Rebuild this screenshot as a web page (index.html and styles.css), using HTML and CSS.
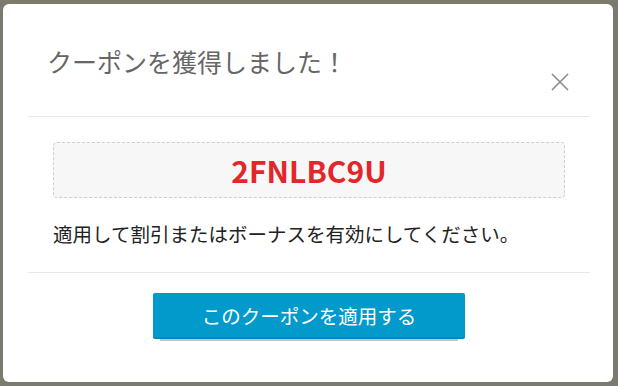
FILE: index.html
```html
<!DOCTYPE html>
<html lang="ja">
  <head>
    <meta charset="UTF-8" />
    <meta name="viewport" content="width=device-width, initial-scale=1" />
    <title>クーポン</title>
    <link rel="stylesheet" href="styles.css">
  </head>
  <body>
    <div class="backdrop">
      <div class="modal">
        <div class="modal-header">
          <h2 class="modal-title">クーポンを獲得しました！</h2>
          <button class="close-btn" aria-label="閉じる">
            <svg width="18" height="18" viewBox="0 0 18 18">
              <path d="M1 1 L17 17 M17 1 L1 17" stroke="#8a8a8a" stroke-width="1.6" fill="none" />
            </svg>
          </button>
        </div>

        <div class="modal-body">
          <div class="coupon-code">2FNLBC9U</div>
          <p class="coupon-note">適用して割引またはボーナスを有効にしてください。</p>
        </div>

        <div class="modal-footer">
          <button class="apply-btn">このクーポンを適用する</button>
        </div>
      </div>
    </div>
  </body>
</html>
```

FILE: styles.css
```css
body {
  margin: 0;
  padding: 0;
  font-family: "Noto Sans CJK JP", "Noto Sans", sans-serif;
  background-color: #7b7a6d;
}

.backdrop {
  width: 618px;
  height: 386px;
  padding: 4px 5px 4px 3px;
  box-sizing: border-box;
}

.modal {
  height: 378px;
  background-color: white;
  border-radius: 6px;
  padding: 0 23px 0 25px;
  box-sizing: border-box;
}

.modal-header {
  display: flex;
  align-items: flex-start;
  height: 112px;
  border-bottom: 1px solid #e8e8e8;
}

.modal-title {
  margin: 42px 0 0 19px;
  font-size: 25px;
  font-weight: normal;
  line-height: 30px;
  color: #666;
}

.close-btn {
  margin: 69px 21px 0 auto;
  padding: 0;
  border: none;
  background: none;
  width: 18px;
  height: 18px;
  cursor: pointer;
}

.close-btn svg {
  display: block;
}

.modal-body {
  padding: 25px 25px 0;
  height: 156px;
  box-sizing: border-box;
  border-bottom: 1px solid #e8e8e8;
}

.coupon-code {
  height: 56px;
  box-sizing: border-box;
  border: 1px dashed #cfcfcf;
  border-radius: 4px;
  background-color: #f7f7f7;
  text-align: center;
  font-size: 30px;
  font-weight: bold;
  line-height: 54px;
  color: #e3262a;
}

.coupon-note {
  margin: 22px 0 0;
  font-size: 19.5px;
  line-height: 28px;
  color: #222;
}

.modal-footer {
  display: flex;
  justify-content: center;
  padding-top: 20px;
}

.apply-btn {
  width: 312px;
  height: 46px;
  font-family: inherit;
  font-size: 19.5px;
  color: white;
  background-color: #019acb;
  border: none;
  border-bottom: 2px solid #0188b4;
  border-radius: 2px;
  box-shadow: 0 9px 0 -7px #c4c4c4;
  cursor: pointer;
}
```
